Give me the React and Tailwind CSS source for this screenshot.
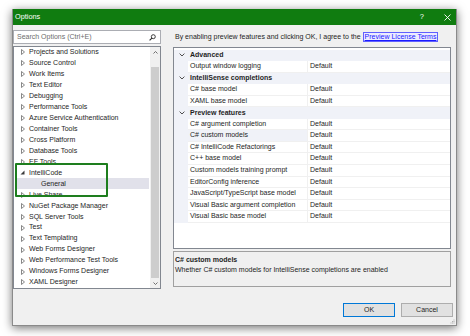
import React from 'react';

const treeItems = [
  { t: 'Projects and Solutions' },
  { t: 'Source Control' },
  { t: 'Work Items' },
  { t: 'Text Editor' },
  { t: 'Debugging' },
  { t: 'Performance Tools' },
  { t: 'Azure Service Authentication' },
  { t: 'Container Tools' },
  { t: 'Cross Platform' },
  { t: 'Database Tools' },
  { t: 'EF Tools' },
  { t: 'IntelliCode', open: true },
  { t: 'General', child: true, sel: true },
  { t: 'Live Share' },
  { t: 'NuGet Package Manager' },
  { t: 'SQL Server Tools' },
  { t: 'Test' },
  { t: 'Text Templating' },
  { t: 'Web Forms Designer' },
  { t: 'Web Performance Test Tools' },
  { t: 'Windows Forms Designer' },
  { t: 'XAML Designer' },
];

const gridRows = [
  { c: 'Advanced' },
  { n: 'Output window logging' },
  { c: 'IntelliSense completions' },
  { n: 'C# base model' },
  { n: 'XAML base model' },
  { c: 'Preview features' },
  { n: 'C# argument completion' },
  { n: 'C# custom models', sel: true },
  { n: 'C# IntelliCode Refactorings' },
  { n: 'C++ base model' },
  { n: 'Custom models training prompt' },
  { n: 'EditorConfig inference' },
  { n: 'JavaScript/TypeScript base model' },
  { n: 'Visual Basic argument completion' },
  { n: 'Visual Basic base model' },
];

function Closed() {
  return (
    <svg width="4" height="6" viewBox="0 0 4 6" className="shrink-0">
      <polygon points="0.5,0.5 3.5,3 0.5,5.5" fill="none" stroke="#6a6a6a" strokeWidth="0.8" />
    </svg>
  );
}

function Open() {
  return (
    <svg width="5" height="5" viewBox="0 0 5 5" className="shrink-0">
      <polygon points="4.5,0.5 4.5,4.5 0.5,4.5" fill="#3a3a3a" />
    </svg>
  );
}

function Chevron() {
  return (
    <svg width="6" height="4" viewBox="0 0 6 4">
      <polyline points="0.6,0.6 3,3 5.4,0.6" fill="none" stroke="#3c3c3c" strokeWidth="0.9" />
    </svg>
  );
}

export default function App() {
  return (
    <div className="w-[470px] h-[336px] bg-white overflow-hidden font-['Liberation_Sans',Arial,sans-serif] text-[7px] text-[#1e1e1e]">
      <div className="relative ml-[12px] mt-[9px] w-[445px] h-[317px] bg-[#f0f0f0] border border-[#8a8a8a] border-t-0 shadow-[0_2px_9px_rgba(0,0,0,0.55)] flex flex-col">
        {/* title bar */}
        <div className="h-[16px] bg-[#107c10] flex items-center text-white pl-[2px]">
          <span className="text-[7.3px]">Options</span>
          <span className="ml-auto text-[7.5px] mr-[20px]">?</span>
          <svg width="7" height="7" viewBox="0 0 7 7" className="mr-[5px]">
            <path d="M0.5 0.5 L6.5 6.5 M6.5 0.5 L0.5 6.5" stroke="white" strokeWidth="0.9" />
          </svg>
        </div>

        {/* content */}
        <div className="flex">
          {/* left */}
          <div className="w-[148px] flex flex-col">
            <div className="mt-[5px] h-[14px] bg-white border border-[#abadb3] flex items-center pl-[3px] pr-[4px] text-[#6d6d6d]">
              <span>Search Options (Ctrl+E)</span>
              <svg width="7" height="7" viewBox="0 0 7 7" className="ml-auto">
                <circle cx="4.3" cy="2.7" r="2" fill="none" stroke="#2a2a2a" strokeWidth="0.9" />
                <path d="M2.9 4.1 L0.6 6.4" stroke="#2a2a2a" strokeWidth="1.1" />
              </svg>
            </div>
            <div className="relative mt-[2px] h-[243px] bg-white border border-[#828790] flex">
              <div className="flex-1 flex flex-col">
                {treeItems.map((it, i) => (
                  <div
                    key={i}
                    className={`h-[11px] flex items-center ${it.sel ? 'bg-[#e1e1ea] mx-[1px]' : ''}`}
                  >
                    {it.child ? (
                      <span className="pl-[26px]">{it.t}</span>
                    ) : (
                      <>
                        <div className="w-[14px] flex justify-end pr-[3px]">{it.open ? <Open /> : <Closed />}</div>
                        <span className="pl-[1px]">{it.t}</span>
                      </>
                    )}
                  </div>
                ))}
              </div>
              <div className="w-[10px] bg-[#f0f0f0] flex flex-col">
                <div className="h-[10px] flex items-center justify-center">
                  <svg width="5" height="3" viewBox="0 0 5 3">
                    <polyline points="0.5,2.5 2.5,0.5 4.5,2.5" fill="none" stroke="#606060" strokeWidth="0.9" />
                  </svg>
                </div>
                <div className="h-[10px]" />
                <div className="flex-1 mx-[1px] bg-[#cdcdcd]" />
                <div className="h-[10px] flex items-center justify-center">
                  <svg width="5" height="3" viewBox="0 0 5 3">
                    <polyline points="0.5,0.5 2.5,2.5 4.5,0.5" fill="none" stroke="#606060" strokeWidth="0.9" />
                  </svg>
                </div>
              </div>
              {/* annotation */}
              <div className="absolute left-[1px] top-[116px] w-[93px] h-[34px] border-[2.5px] border-[#1e7e1e] rounded-[1px]" />
            </div>
          </div>

          {/* right */}
          <div className="ml-[12px] w-[278px] flex flex-col">
            <div className="h-[22px] flex items-center pl-[2px] pt-[2px]">
              <span>By enabling preview features and clicking OK, I agree to the </span>
              <span className="ml-[2px] px-[1px] border border-[#6060ff] bg-[#ececff] text-[#1a1aff] underline leading-[8px]">
                Preview License Terms
              </span>
            </div>
            <div className="h-[202px] bg-white border border-[#828790] flex flex-col pt-[1.5px]">
              {gridRows.map((r, i) =>
                r.c ? (
                  <div key={i} className="h-[11.55px] flex items-center bg-[#f0f2f8] font-bold">
                    <div className="w-[14px] flex justify-center pl-[1px]">
                      <Chevron />
                    </div>
                    <span className="pl-[2px]">{r.c}</span>
                  </div>
                ) : (
                  <div key={i} className="h-[11.55px] flex">
                    <div className="w-[14px] bg-[#f0f2f8]" />
                    <div
                      className={`w-[120px] flex items-center pl-[2px] border-r border-[#f0f0f0] border-b ${
                        r.sel ? 'bg-[#f0f2f8]' : ''
                      }`}
                    >
                      {r.n}
                    </div>
                    <div className="flex-1 flex items-center pl-[2px] border-b border-[#f0f0f0]">Default</div>
                  </div>
                )
              )}
            </div>
            <div className="mt-[2px] h-[36px] border border-[#a0a0a0] bg-[#f0f0f0] flex flex-col pl-[1px] pt-[3px]">
              <div className="font-bold leading-[10px]">C# custom models</div>
              <div className="leading-[10px]">Whether C# custom models for IntelliSense completions are enabled</div>
            </div>
          </div>
        </div>

        {/* buttons */}
        <div className="mt-[14px] flex justify-end gap-[6px] mr-[3px]">
          <div className="w-[52px] h-[14px] border border-[#0078d7] bg-[#e1e1e1] flex items-center justify-center">
            OK
          </div>
          <div className="w-[52px] h-[14px] border border-[#adadad] bg-[#e1e1e1] flex items-center justify-center">
            Cancel
          </div>
        </div>
        <svg width="5" height="5" viewBox="0 0 5 5" className="absolute right-[1px] bottom-[1px]">
          <rect x="3.5" y="0.5" width="1" height="1" fill="#b0b0b0" />
          <rect x="2" y="2" width="1" height="1" fill="#b0b0b0" />
          <rect x="3.5" y="2" width="1" height="1" fill="#b0b0b0" />
          <rect x="0.5" y="3.5" width="1" height="1" fill="#b0b0b0" />
          <rect x="2" y="3.5" width="1" height="1" fill="#b0b0b0" />
          <rect x="3.5" y="3.5" width="1" height="1" fill="#b0b0b0" />
        </svg>
      </div>
    </div>
  );
}
